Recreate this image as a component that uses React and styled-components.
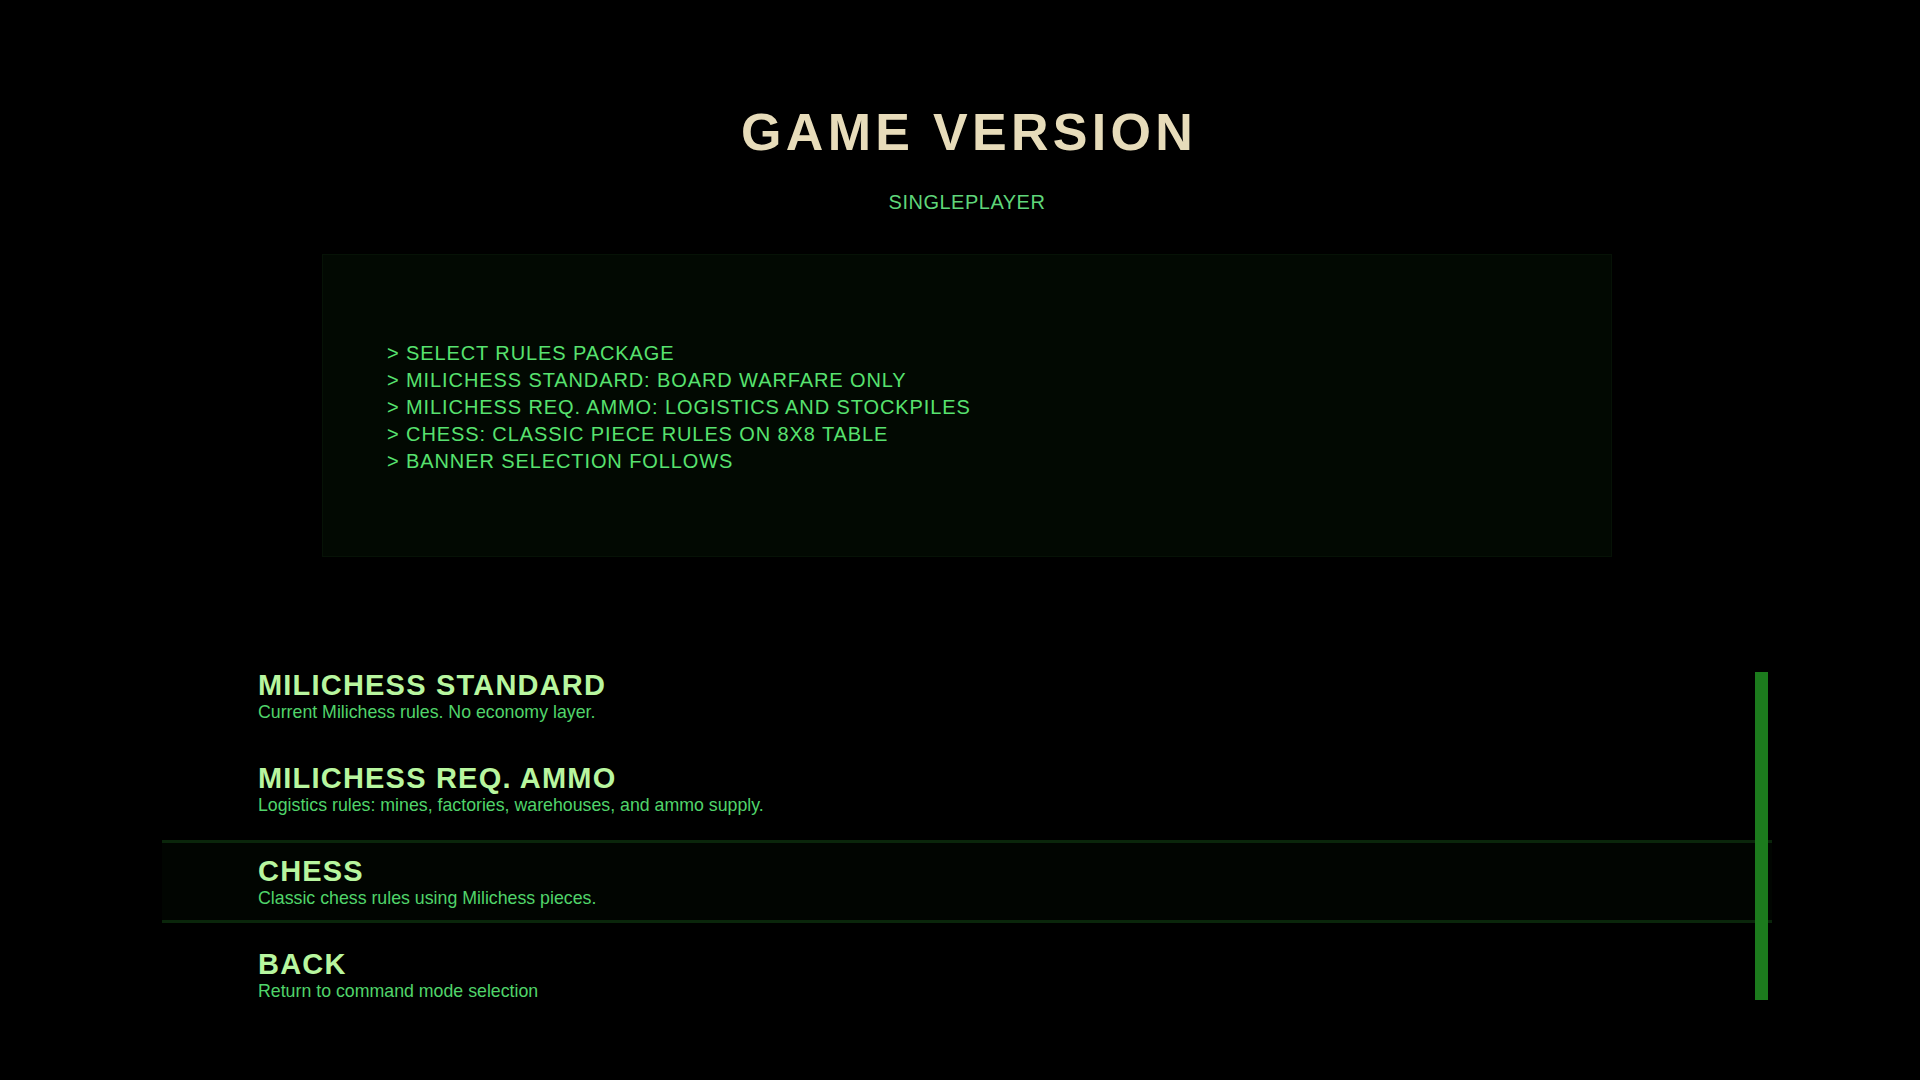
import React from "react";
import styled, { createGlobalStyle } from "styled-components";

const Global = createGlobalStyle`
  html, body {
    margin: 0;
    padding: 0;
    background: #000;
  }
  body {
    font-family: "Liberation Sans", Arial, sans-serif;
  }
`;

const Page = styled.main`
  width: 1920px;
  height: 1080px;
  box-sizing: border-box;
  padding: 101px 0 0 14px;
  display: flex;
  flex-direction: column;
  align-items: center;
  background: #000;
  overflow: hidden;
`;

const Title = styled.h1`
  margin: 0;
  font-family: "Liberation Sans", Arial, sans-serif;
  font-weight: 700;
  font-size: 52px;
  line-height: 1.2;
  letter-spacing: 4.3px;
  color: #e7dcba;
  text-indent: 4.3px;
`;

const Subtitle = styled.div`
  margin-top: 26px;
  font-size: 20px;
  line-height: 26px;
  letter-spacing: 0.5px;
  color: #5fd67a;
`;

const Terminal = styled.section`
  margin-top: 39px;
  width: 1290px;
  height: 303px;
  box-sizing: border-box;
  padding: 4px 64px 0;
  display: flex;
  flex-direction: column;
  justify-content: center;
  background: #020902;
  border: 1px solid #061206;
`;

const TermLine = styled.div`
  font-size: 20px;
  line-height: 27px;
  letter-spacing: 0.9px;
  color: #57e26f;
  white-space: nowrap;
`;

const List = styled.nav`
  position: relative;
  margin-top: 97px;
  width: 1610px;
  display: flex;
  flex-direction: column;
  gap: 10px;
`;

const Row = styled.div`
  box-sizing: border-box;
  height: 83px;
  padding: 12px 96px 10px;
  border-top: 3px solid ${(p) => (p.$active ? "#0a260b" : "transparent")};
  border-bottom: 3px solid ${(p) => (p.$active ? "#0a260b" : "transparent")};
  background: ${(p) => (p.$active ? "#010501" : "transparent")};
`;

const RowTitle = styled.div`
  font-weight: 700;
  font-size: 29px;
  line-height: 32px;
  letter-spacing: 1.2px;
  color: #b8f69f;
`;

const RowDesc = styled.div`
  font-size: 17.75px;
  line-height: 22px;
  color: #50d46a;
`;

const ScrollThumb = styled.div`
  position: absolute;
  right: 4px;
  top: 18px;
  width: 13px;
  height: 328px;
  background: #1c7b1d;
`;

const lines = [
  "> SELECT RULES PACKAGE",
  "> MILICHESS STANDARD: BOARD WARFARE ONLY",
  "> MILICHESS REQ. AMMO: LOGISTICS AND STOCKPILES",
  "> CHESS: CLASSIC PIECE RULES ON 8X8 TABLE",
  "> BANNER SELECTION FOLLOWS",
];

const items = [
  { title: "MILICHESS STANDARD", desc: "Current Milichess rules. No economy layer." },
  { title: "MILICHESS REQ. AMMO", desc: "Logistics rules: mines, factories, warehouses, and ammo supply." },
  { title: "CHESS", desc: "Classic chess rules using Milichess pieces.", active: true },
  { title: "BACK", desc: "Return to command mode selection" },
];

export default function App() {
  return (
    <>
      <Global />
      <Page>
        <Title>GAME VERSION</Title>
        <Subtitle>SINGLEPLAYER</Subtitle>
        <Terminal>
          {lines.map((l) => (
            <TermLine key={l}>{l}</TermLine>
          ))}
        </Terminal>
        <List>
          {items.map((it) => (
            <Row key={it.title} $active={it.active}>
              <RowTitle>{it.title}</RowTitle>
              <RowDesc>{it.desc}</RowDesc>
            </Row>
          ))}
          <ScrollThumb />
        </List>
      </Page>
    </>
  );
}
